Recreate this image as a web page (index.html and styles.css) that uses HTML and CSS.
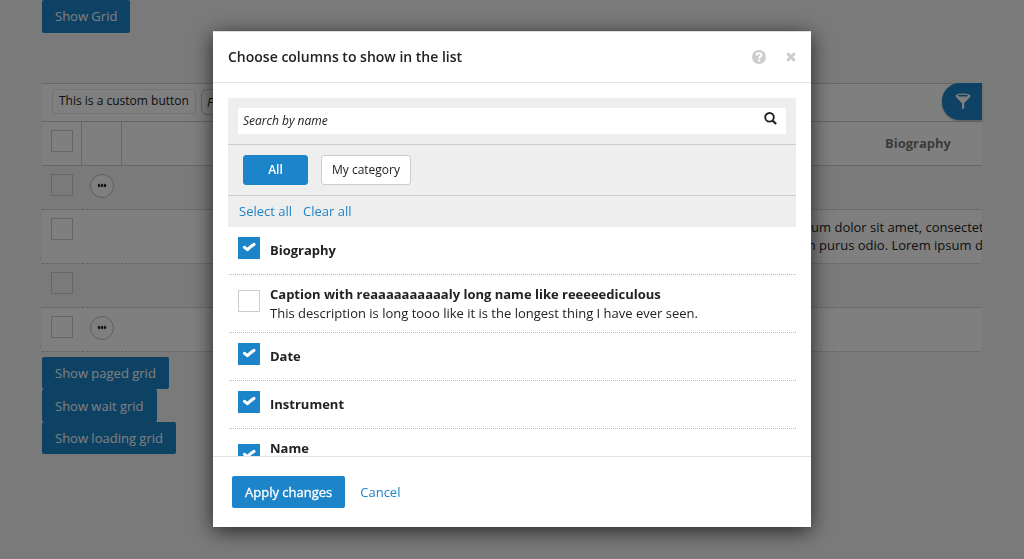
FILE: index.html
```html
<!DOCTYPE html>
<html lang="en">
<head>
<meta charset="utf-8">
<meta name="viewport" content="width=device-width, initial-scale=1">
<title>Grid columns</title>
<link rel="stylesheet" href="styles.css">
</head>
<body>
<main class="page">
  <button class="btn btn-tall btn-first" type="button">Show Grid</button>
  <section class="grid">
    <div class="grid-toolbar">
      <button class="btn-custom" type="button">This is a custom button</button>
      <input class="grid-search" type="text" placeholder="Find" aria-label="Find">
      <button class="filter-toggle" type="button" aria-label="Filter">
        <svg width="16" height="17" viewBox="0 0 16 17"><path fill-rule="evenodd" fill="#fff" d="M8 .5c4 0 7.400.9 7.400 2.400 0 .5-.3.9-.6 1.300L9.200 10.300v4.900L7 16.300v-6L1.200 4.200C.8 3.700.6 3.300.6 2.900.6 1.400 4 .5 8 .5zM8 1.800c-3 0-5.300.4-5.300.9S5 3.600 8 3.600s5.300-.4 5.300-.9S11 1.800 8 1.800z"/></svg>
      </button>
    </div>
    <div class="grid-scroll">
      <table class="grid-table">
        <colgroup><col class="col-tool"><col class="col-tool"><col class="col-main"><col class="col-bio"></colgroup>
        <thead>
          <tr><th><input class="check" type="checkbox" aria-label="Select all rows"></th><th></th><th></th><th class="head-bio">Biography</th></tr>
        </thead>
        <tbody>
          <tr><td><input class="check" type="checkbox" aria-label="Select row 1"></td><td><button class="more" type="button" aria-label="More"><i></i><i></i><i></i></button></td><td></td><td></td></tr>
          <tr class="row-text"><td><input class="check" type="checkbox" aria-label="Select row 2"></td><td></td><td></td><td>Lorem ipsum dolor sit amet, consectetur adip<br>Aliquam in purus odio. Lorem ipsum dolor sit</td></tr>
          <tr><td><input class="check" type="checkbox" aria-label="Select row 3"></td><td></td><td></td><td></td></tr>
          <tr><td><input class="check" type="checkbox" aria-label="Select row 4"></td><td><button class="more" type="button" aria-label="More"><i></i><i></i><i></i></button></td><td></td><td></td></tr>
        </tbody>
      </table>
    </div>
  </section>
  <div class="demo-buttons">
    <button class="btn" type="button">Show paged grid</button>
    <button class="btn btn-tall" type="button">Show wait grid</button>
    <button class="btn" type="button">Show loading grid</button>
  </div>
</main>

<div class="overlay">
  <section class="dialog" role="dialog" aria-modal="true" aria-labelledby="dialog-title">
    <header class="dialog-head">
      <h2 id="dialog-title">Choose columns to show in the list</h2>
      <button class="icon-btn" type="button" aria-label="Help">
        <svg width="14" height="14" viewBox="0 0 14 14"><circle cx="7" cy="7" r="7" fill="#ccc"/><path d="M4.500 5.400C4.500 3.900 5.500 3.200 7 3.200s2.500.8 2.500 2C9.500 6.700 7.200 6.700 7.200 8.500" fill="none" stroke="#fff" stroke-width="2"/><path d="M6.100 9.500h2.200v2H6.100z" fill="#fff"/></svg>
      </button>
      <button class="icon-btn" type="button" aria-label="Close">
        <svg width="10" height="10" viewBox="0 0 10 10"><path d="M1.300 1.300l7.400 7.400M8.700 1.300L1.300 8.700" stroke="#ccc" stroke-width="2.800"/></svg>
      </button>
    </header>
    <div class="dialog-body">
      <div class="panel">
        <div class="panel-search">
          <div class="search-box">
            <input type="text" placeholder="Search by name" aria-label="Search by name">
            <svg width="13" height="13" viewBox="0 0 13 13"><circle cx="5.500" cy="5.300" r="4.300" fill="none" stroke="#222" stroke-width="1.900"/><path d="M8.500 8.500l3.700 3.500" stroke="#222" stroke-width="2.200"/></svg>
          </div>
        </div>
        <div class="panel-tabs">
          <button class="tab tab-active" type="button">All</button>
          <button class="tab" type="button">My category</button>
        </div>
        <div class="panel-links"><a href="#">Select all</a><a href="#">Clear all</a></div>
      </div>
      <ul class="columns">
        <li><label class="item"><input class="check" type="checkbox" checked><span><b>Biography</b></span></label></li>
        <li><label class="item item-tall"><input class="check" type="checkbox"><span><b>Caption with reaaaaaaaaaaly long name like reeeeediculous</b>This description is long tooo like it is the longest thing I have ever seen.</span></label></li>
        <li><label class="item"><input class="check" type="checkbox" checked><span><b>Date</b></span></label></li>
        <li><label class="item"><input class="check" type="checkbox" checked><span><b>Instrument</b></span></label></li>
        <li><label class="item item-tall"><input class="check" type="checkbox" checked><span><b>Name</b></span></label></li>
      </ul>
    </div>
    <footer class="dialog-foot">
      <button class="btn btn-apply" type="button">Apply changes</button>
      <a href="#">Cancel</a>
    </footer>
  </section>
</div>
</body>
</html>
```

FILE: styles.css
```css
* { box-sizing: border-box; }

body {
  margin: 0;
  height: 100vh;
  overflow: hidden;
  background: #f5f5f5;
  color: #222;
  font: 13px/18px "Open Sans", "Noto Sans", sans-serif;
}

button, input { font: inherit; color: inherit; margin: 0; }
button { cursor: pointer; }
a { color: #1c84c8; text-decoration: none; }

.page { padding: 0 42px; }

.btn {
  display: block;
  height: 32px;
  padding: 0 13px;
  border: 0;
  border-radius: 2px;
  background: #1c84c8;
  color: #fff;
}
.btn-tall { height: 33px; }
.btn-first { padding-bottom: 2px; }
.btn-apply { -webkit-text-stroke: 0.3px #fff; }

.grid { margin-top: 50px; }
.grid-toolbar {
  display: flex;
  align-items: flex-start;
  gap: 5px;
  height: 39px;
  padding: 5px 0 0 10px;
  border: solid #ccc;
  border-width: 1px 0;
  background: #fff;
}
.btn-custom {
  flex: none;
  height: 25px;
  padding: 0 6px 1px;
  border: 1px solid #e6e6e6;
  border-radius: 3px;
  background: #fff;
  font-size: 12px;
}
.grid-search {
  width: 160px;
  height: 26px;
  padding: 0 5px;
  border: 1px solid #ccc;
  border-radius: 6px;
  background: #fff;
  font-size: 12px;
  font-style: italic;
}
::placeholder { color: #222; opacity: 1; }
.filter-toggle {
  display: flex;
  align-items: center;
  justify-content: center;
  width: 40px;
  height: 37px;
  margin: -6px 0 0 auto;
  padding: 0 0 0 2px;
  border: 0;
  border-radius: 18px 0 0 18px;
  background: #1c84c8;
  box-shadow: 0 1px 2px rgba(0, 0, 0, .3);
}

.grid-scroll { overflow: hidden; }
.grid-table {
  width: 1047px;
  table-layout: fixed;
  border-spacing: 0;
}
.col-tool { width: 40px; }
.col-bio { width: 342px; }
.grid-table th,
.grid-table td {
  height: 44px;
  padding: 8px 8px 0;
  vertical-align: top;
  text-align: left;
  white-space: nowrap;
}
.grid-table th { background: #fff; border-bottom: 1px solid #ccc; }
.grid-table th:nth-child(-n+2) { border-right: 1px solid #ccc; }
.grid-table td { border-bottom: 1px dotted #bbb; }
.grid-table td:last-child { padding-left: 4px; }
.grid-table tr > :first-child { padding-left: 9px; }
.grid-table tr:nth-child(even) td { background: #fff; }
.grid-table .row-text td { height: 54px; }
.grid-table .head-bio {
  padding-top: 0;
  padding-bottom: 1px;
  color: #777;
  text-align: center;
  vertical-align: middle;
}

.check {
  appearance: none;
  display: block;
  flex: none;
  width: 22px;
  height: 22px;
  border: 1px solid #ccc;
  background: #fff;
}
.grid-table .check { background: transparent; }
.check:checked {
  border-color: #1c84c8;
  background: #1c84c8 url("data:image/svg+xml,%3Csvg xmlns='http://www.w3.org/2000/svg' viewBox='0 0 20 20'%3E%3Cpath d='M5.400 9.300l3 2.300C10.500 9.500 12.500 7.600 15 6.300' fill='none' stroke='%23fff' stroke-width='3' stroke-linejoin='round' stroke-linecap='round'/%3E%3C/svg%3E") center / 20px;
}

.more {
  display: flex;
  align-items: center;
  justify-content: center;
  gap: 1px;
  width: 24px;
  height: 24px;
  padding: 0 0 1px;
  border: 1px solid #bbb;
  border-radius: 50%;
  background: #fff;
}
.more i { width: 2px; height: 3px; border-radius: 1px; background: #111; outline: 1px solid rgba(0, 0, 0, .1); }

.demo-buttons { padding-top: 5px; }

.overlay {
  position: fixed;
  inset: 0;
  display: flex;
  align-items: center;
  justify-content: center;
  padding-bottom: 2px;
  background: rgba(0, 0, 0, .5);
}
.dialog {
  display: flex;
  flex-direction: column;
  width: 598px;
  max-width: 100%;
  background: #fff;
  box-shadow: 0 4px 20px rgba(0, 0, 0, .7);
}
.dialog-head {
  display: flex;
  align-items: center;
  gap: 20px;
  height: 52px;
  padding: 0 15px;
  border-top: 1px solid #ddd;
  border-bottom: 1px solid #e2e2e2;
}
.dialog-head h2 {
  flex: 1;
  margin: 0;
  font-size: 14px;
  font-weight: 600;
}
.icon-btn {
  display: flex;
  padding: 0;
  border: 0;
  background: none;
}

.dialog-body {
  max-height: calc(100vh - 186px);
  padding: 15px 15px 0;
  overflow: hidden;
}
.panel { background: #eee; }
.panel-search {
  padding: 10px;
  border-bottom: 1px solid #ccc;
}
.search-box {
  display: flex;
  height: 26px;
  padding: 3px 9px 0 5px;
  background: #fff;
}
.search-box svg { margin-top: 1px; }
.search-box input {
  flex: 1;
  height: 20px;
  padding: 0;
  border: 0;
  outline: 0;
  background: none;
  font-size: 12px;
  font-style: italic;
}
.panel-tabs {
  display: flex;
  gap: 13px;
  padding: 10px 15px;
  border-bottom: 1px solid #ccc;
}
.tab {
  min-width: 65px;
  height: 30px;
  padding: 0 10px;
  border: 1px solid #ccc;
  border-radius: 3px;
  background: #fff;
  font-size: 12px;
}
.tab-active { border-color: #1c84c8; background: #1c84c8; color: #fff; font-weight: 600; }
.panel-links {
  display: flex;
  gap: 11px;
  padding: 6px 11px 7px;
}

.columns { margin: 0; padding: 0 0 0 1px; list-style: none; }
.item {
  display: flex;
  gap: 10px;
  padding: 10px 9px 9px;
  border-bottom: 1px dotted #bbb;
}
.item span { display: flex; flex-direction: column; justify-content: center; min-height: 28px; line-height: 19px; }
.item-tall span { justify-content: flex-start; min-height: 38px; }
.item-tall .check { margin-top: 5px; }

.dialog-foot {
  display: flex;
  align-items: center;
  gap: 15px;
  height: 71px;
  padding: 0 19px;
  border-top: 1px solid #e2e2e2;
}
```
